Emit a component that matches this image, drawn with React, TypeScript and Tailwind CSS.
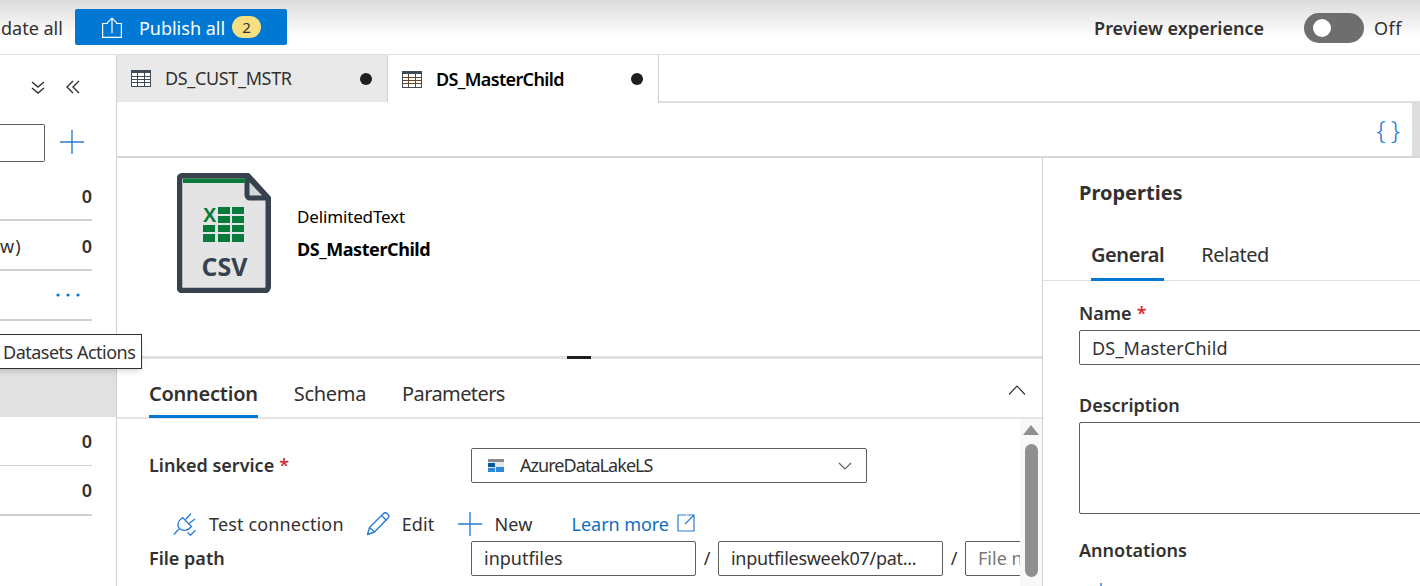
import React from "react";

const TableIcon = ({ line }: { line: string }) => (
  <svg width="20" height="17" viewBox="0 0 20 17" fill="none" className="shrink-0">
    <rect x="0.5" y="0.5" width="19" height="16" fill="#fff" stroke="#3e4a55" />
    <rect x="1" y="1" width="18" height="2" fill="#3e4a55" />
    <path d="M1 6.5h18M1 9.5h18M1 12.5h18M6.5 3v13M13.5 3v13" stroke={line} strokeWidth="1" />
  </svg>
);

const UploadIcon = () => (
  <svg width="20" height="21" viewBox="0 0 20 21" fill="none" stroke="#fff" strokeWidth="1.2" className="shrink-0">
    <path d="M6 6.5H.6v13.9h18.8V6.5H14" />
    <path d="M10 16V1.2M5 6.2 10 1l5 5.2" />
  </svg>
);

const CsvIcon = () => (
  <svg width="94" height="120" viewBox="0 0 94 120" className="shrink-0">
    <path d="M5 2.75h66L91.25 25v89a3.5 3.5 0 0 1-3.5 3.5H5a2.5 2.5 0 0 1-2.5-2.5V5.25A2.5 2.5 0 0 1 5 2.75Z" fill="#e4e4e4" stroke="#36424d" strokeWidth="5.5" strokeLinejoin="round" />
    <path d="M70 3v19a3 3 0 0 0 3 3h18Z" fill="#d3d7da" stroke="#36424d" strokeWidth="5" strokeLinejoin="round" />
    <rect x="6" y="5.5" width="63" height="4.5" fill="#0a7a3a" />
    <text x="26" y="49" fontFamily="'Liberation Sans', sans-serif" fontWeight="700" fontSize="20" fill="#0a7a3a">X</text>
    <g fill="#0a7a3a">
      <rect x="41" y="34" width="12" height="7" />
      <rect x="55" y="34" width="12" height="7" />
      <rect x="41" y="43" width="12" height="7" />
      <rect x="55" y="43" width="12" height="7" />
      <rect x="26" y="52" width="12" height="7" />
      <rect x="41" y="52" width="12" height="7" />
      <rect x="55" y="52" width="12" height="7" />
      <rect x="26" y="61" width="12" height="8" />
      <rect x="41" y="61" width="12" height="8" />
      <rect x="55" y="61" width="12" height="8" />
    </g>
    <text x="47.5" y="103" textAnchor="middle" fontFamily="'Open Sans', sans-serif" fontWeight="700" fontSize="25" fill="#36424d">CSV</text>
  </svg>
);

const PlugIcon = () => (
  <svg width="24" height="24" viewBox="0 0 24 24" fill="none" stroke="#2b7cd3" strokeWidth="1.3" className="shrink-0">
    <path d="M9.5 5.5 18.5 14.5C15 19 9.5 19.5 6.5 16.5 3.5 13.5 5 9 9.5 5.5Z" />
    <path d="M6 17 .8 22.5M12.5 7.5 18 1.5M16 11.5 22 7M14.5 20.5l3 2.7 5-5" />
  </svg>
);

const PencilIcon = () => (
  <svg width="24" height="24" viewBox="0 0 24 24" fill="none" stroke="#2b7cd3" strokeWidth="1.4" strokeLinejoin="round" className="shrink-0">
    <path d="M1.5 22.5 3.5 15.5 17.5 1.5a2.5 2.5 0 0 1 3.5 0l1 1a2.5 2.5 0 0 1 0 3.5L8.5 20Z" />
    <path d="M3.5 15.5 8.5 20M15.5 3.5l5 5" />
  </svg>
);

const PlusIcon = ({ size }: { size: number }) => (
  <svg width={size} height={size} viewBox="0 0 24 24" fill="none" stroke="#2b7cd3" strokeWidth={(24 / size) * 1.4} className="shrink-0">
    <path d="M12 0v24M0 12h24" />
  </svg>
);

const ExternalIcon = () => (
  <svg width="18" height="18" viewBox="0 0 18 18" fill="none" stroke="#2b7cd3" strokeWidth="1.2" className="shrink-0">
    <path d="M9 1H1v16h16V8" />
    <path d="M10 1h7v7M17 1 8 10" />
  </svg>
);

const Req = () => <span className="text-[#d13438] ml-[5px]">*</span>;

const Row = ({ h, v, thick, label, pad }: { h: string; v: string; thick?: boolean; label?: string; pad?: boolean }) => (
  <div className={`${h} w-[92px] ${pad ? "pt-[2px]" : ""} flex items-center justify-between ${thick ? "border-b-2" : "border-b"} border-[#d0d0d0]`}>
    <span className="tracking-[1px]">{label}</span>
    <span className="font-semibold">{v}</span>
  </div>
);

const Field = ({ children, cls }: { children: React.ReactNode; cls: string }) => (
  <div className={`${cls} h-[35px] shrink-0 border border-[#605e5c] rounded-[2px] flex items-center px-[12px] whitespace-nowrap overflow-hidden`}>
    {children}
  </div>
);

const TabLabel = ({ active, children, cls }: { active?: boolean; children: React.ReactNode; cls?: string }) => (
  <div className={`${cls ?? ""} text-[20px] border-b-[3px] ${active ? "border-[#0078d4] font-semibold" : "border-transparent"}`}>{children}</div>
);

export default function App() {
  return (
    <div className="relative w-[1420px] h-[586px] overflow-hidden bg-white text-[#323130] text-[18px] font-['Noto_Sans','Open_Sans',sans-serif] flex flex-col">
      {/* top bar */}
      <header className="h-[55px] shrink-0 border-b border-[#e0e0e0] bg-gradient-to-b from-[#dcdcdc] via-[#ffffff] via-70% to-white flex items-center pr-[18px]">
        <span className="pl-[1px] pt-[2px]">date all</span>
        <button className="ml-[12px] w-[212px] h-[36px] rounded-[2px] bg-[#0078d4] text-white flex items-center pl-[27px]">
          <UploadIcon />
          <span className="ml-[17px] pt-[2px]">Publish all</span>
          <span className="ml-[7px] w-[29px] h-[22px] rounded-full bg-[#f6df80] text-[#323130] text-[15px] flex items-center justify-center">2</span>
        </button>
        <span className="ml-auto font-semibold pt-[2px]">Preview experience</span>
        <span className="ml-[40px] mt-[2px] w-[60px] h-[30px] rounded-full bg-[#6e6e6e] flex items-center pl-[9px]">
          <span className="w-[18px] h-[18px] rounded-full bg-white" />
        </span>
        <span className="ml-[10px] pt-[2px] tracking-[0.5px]">Off</span>
      </header>

      <div className="flex-1 flex min-h-0">
        {/* left sidebar */}
        <aside className="w-[117px] shrink-0 border-r border-[#d0d0d0] flex flex-col relative">
          <div className="h-[69px] shrink-0 flex items-center pl-[30px] pb-[6px] gap-[19px] text-[#323130]">
            <svg width="16" height="16" viewBox="0 0 16 16" fill="none" stroke="#323130" strokeWidth="1.4"><path d="M2 3l6 5 6-5M2 9l6 5 6-5" /></svg>
            <svg width="16" height="16" viewBox="0 0 16 16" fill="none" stroke="#323130" strokeWidth="1.4"><path d="M8 2 2 8l6 6M14 2 8 8l6 6" /></svg>
          </div>
          <div className="h-[38px] shrink-0 flex items-center">
            <div className="w-[45px] h-[38px] border border-l-0 border-[#605e5c] rounded-r-[2px]" />
            <span className="ml-[15px] mb-[2px]"><PlusIcon size={24} /></span>
          </div>
          <div className="h-[9px] shrink-0" />
          <Row h="h-[50px]" v="0" thick pad />
          <Row h="h-[50px]" v="0" thick label="w)" pad />
          <div className="h-[50px] w-[92px] shrink-0 pr-[12px] flex items-center justify-end border-b-2 border-[#d0d0d0]">
            <svg width="24" height="4" viewBox="0 0 24 4" fill="#0078d4"><circle cx="2" cy="2" r="1.6" /><circle cx="12" cy="2" r="1.6" /><circle cx="22" cy="2" r="1.6" /></svg>
          </div>
          <div className="h-[47px] shrink-0" />
          <div className="h-[49px] shrink-0 bg-[#e1e1e1]" />
          <Row h="h-[49px]" v="0" />
          <Row h="h-[50px]" v="0" thick />
          <div className="absolute left-[-4px] top-[279px] w-[146px] h-[35px] bg-white border border-[#323130] shadow-md flex items-center pl-[6px] whitespace-nowrap z-10 tracking-[-0.5px] pt-[2px]">Datasets Actions</div>
        </aside>

        {/* main */}
        <div className="flex-1 flex flex-col min-w-0">
          <div className="h-[48px] shrink-0 flex">
            <div className="w-[271px] h-[47px] bg-[#e9e9e9] border-r border-[#d0d0d0] flex items-center pl-[14px] pr-[15px]">
              <TableIcon line="#3e4a55" />
              <span className="ml-[14px] tracking-[-0.35px]">DS_CUST_MSTR</span>
              <span className="ml-auto w-[12px] h-[12px] rounded-full bg-[#201f1e]" />
            </div>
            <div className="w-[271px] border-r border-[#d0d0d0] flex items-center pl-[14px] pr-[15px]">
              <TableIcon line="#6b4423" />
              <span className="ml-[14px] font-semibold text-black tracking-[-0.65px]">DS_MasterChild</span>
              <span className="ml-auto w-[12px] h-[12px] rounded-full bg-[#201f1e]" />
            </div>
            <div className="flex-1 border-b-2 border-[#e0e0e0]" />
          </div>
          <div className="h-[55px] shrink-0 border-b-2 border-[#d8d8d8] flex justify-end">
            <span className="self-center mr-[13px] text-[#2b7cd3] text-[26px] font-light tracking-[-1px]">{"{ }"}</span>
            <div className="w-[8px] bg-[#dedede]" />
          </div>

          <div className="flex-1 flex min-h-0">
            {/* center */}
            <section className="w-[926px] shrink-0 border-r border-[#d0d0d0] flex flex-col min-h-0">
              <div className="h-[201px] shrink-0 border-b-[3px] border-[#e0e0e0] relative flex items-start pl-[60px] pt-[15px]">
                <CsvIcon />
                <div className="ml-[26px] mt-[31px] flex flex-col gap-[6px] text-black">
                  <span className="text-[17px] tracking-[-0.15px]">DelimitedText</span>
                  <span className="font-bold tracking-[-0.43px]">DS_MasterChild</span>
                </div>
                <span className="absolute left-[450px] bottom-[-3px] w-[24px] h-[3px] bg-[#201f1e]" />
              </div>
              <div className="h-[60px] shrink-0 border-b-2 border-[#e5e5e5] flex items-end pl-[32px] gap-[36px] relative">
                <TabLabel active cls="-mb-[1px] pb-[6px] tracking-[-0.25px]">Connection</TabLabel>
                <TabLabel cls="-mb-[1px] pb-[6px] tracking-[-0.3px]">Schema</TabLabel>
                <TabLabel cls="-mb-[1px] pb-[6px] tracking-[-0.6px]">Parameters</TabLabel>
                <svg className="absolute right-[16px] top-[26px]" width="18" height="10" viewBox="0 0 18 10" fill="none" stroke="#323130" strokeWidth="1.1"><path d="M1 9.5 9 1l8 8.5" /></svg>
              </div>
              <div className="flex-1 flex min-h-0">
                <div className="w-[903px] shrink-0 overflow-hidden pl-[32px] pt-[29px]">
                  <div className="flex">
                    <div className="w-[322px] shrink-0 font-semibold h-[35px] leading-[35px]">Linked service<Req /></div>
                    <div className="w-[396px] shrink-0 h-[35px] border border-[#605e5c] rounded-[2px] flex items-center pl-[16px] pr-[14px]">
                      <svg width="16" height="14" viewBox="0 0 16 14"><rect width="16" height="3" fill="#8a8a8a" /><rect y="3" width="16" height="10" fill="#e5e5e5" /><rect y="4" width="7" height="4" fill="#005ba1" /><rect x="8" y="8" width="8" height="5" fill="#2b88d8" /><rect y="9" width="7" height="4" fill="#2b88d8" /></svg>
                      <span className="ml-[16px] tracking-[-0.95px]">AzureDataLakeLS</span>
                      <svg className="ml-auto" width="14" height="8" viewBox="0 0 14 8" fill="none" stroke="#605e5c" strokeWidth="1.1"><path d="M1 1l6 6 6-6" /></svg>
                    </div>
                  </div>
                  <div className="flex items-center mt-[24px] h-[34px] pl-[24px] whitespace-nowrap tracking-[0.15px]">
                    <PlugIcon />
                    <span className="ml-[12px]">Test connection</span>
                    <span className="ml-[22px]"><PencilIcon /></span>
                    <span className="ml-[12px]">Edit</span>
                    <span className="ml-[23px]"><PlusIcon size={24} /></span>
                    <span className="ml-[13px]">New</span>
                    <span className="ml-[39px] text-[#106ebe] tracking-[-0.05px]">Learn more</span>
                    <span className="ml-[8px] mb-[3px]"><ExternalIcon /></span>
                  </div>
                  <div className="flex items-center">
                    <div className="w-[322px] shrink-0 font-semibold">File path</div>
                    <Field cls="w-[225px]">inputfiles</Field>
                    <span className="w-[22px] shrink-0 text-center">/</span>
                    <Field cls="w-[225px] tracking-[-0.3px]">inputfilesweek07/pat...</Field>
                    <span className="w-[22px] shrink-0 text-center">/</span>
                    <Field cls="w-[225px] text-[#777]">File name</Field>
                  </div>
                </div>
                <div className="w-[22px] bg-[#f8f8f8] flex flex-col items-center pt-[6px]">
                  <span className="w-0 h-0 border-l-[8px] border-r-[8px] border-b-[10px] border-l-transparent border-r-transparent border-b-[#8f8f8f]" />
                  <span className="w-[13px] h-[133px] mt-[9px] rounded-full bg-[#8f8f8f]" />
                </div>
              </div>
            </section>

            {/* right panel */}
            <section className="flex-1 min-w-0 overflow-hidden">
              <div className="h-[72px] pl-[36px] pt-[20px] font-bold text-[20px]">Properties</div>
              <div className="h-[51px] border-b border-[#e0e0e0] pl-[48px] flex items-end gap-[37px]">
                <TabLabel active cls="-mb-px pb-[8px] tracking-[-0.45px]">General</TabLabel>
                <TabLabel cls="-mb-px pb-[8px] tracking-[-0.45px]">Related</TabLabel>
              </div>
              <div className="pl-[36px] pt-[19px]">
                <div className="font-semibold">Name<Req /></div>
                <Field cls="w-[400px] mt-[3px] tracking-[0.2px] pt-[2px]">DS_MasterChild</Field>
                <div className="font-semibold mt-[27px]">Description</div>
                <div className="w-[400px] h-[92px] mt-[3px] border border-[#605e5c] rounded-[2px]" />
                <div className="font-semibold mt-[23px]">Annotations</div>
                <div className="ml-[12px] mt-[19px]"><PlusIcon size={20} /></div>
              </div>
            </section>
          </div>
        </div>
      </div>
    </div>
  );
}
